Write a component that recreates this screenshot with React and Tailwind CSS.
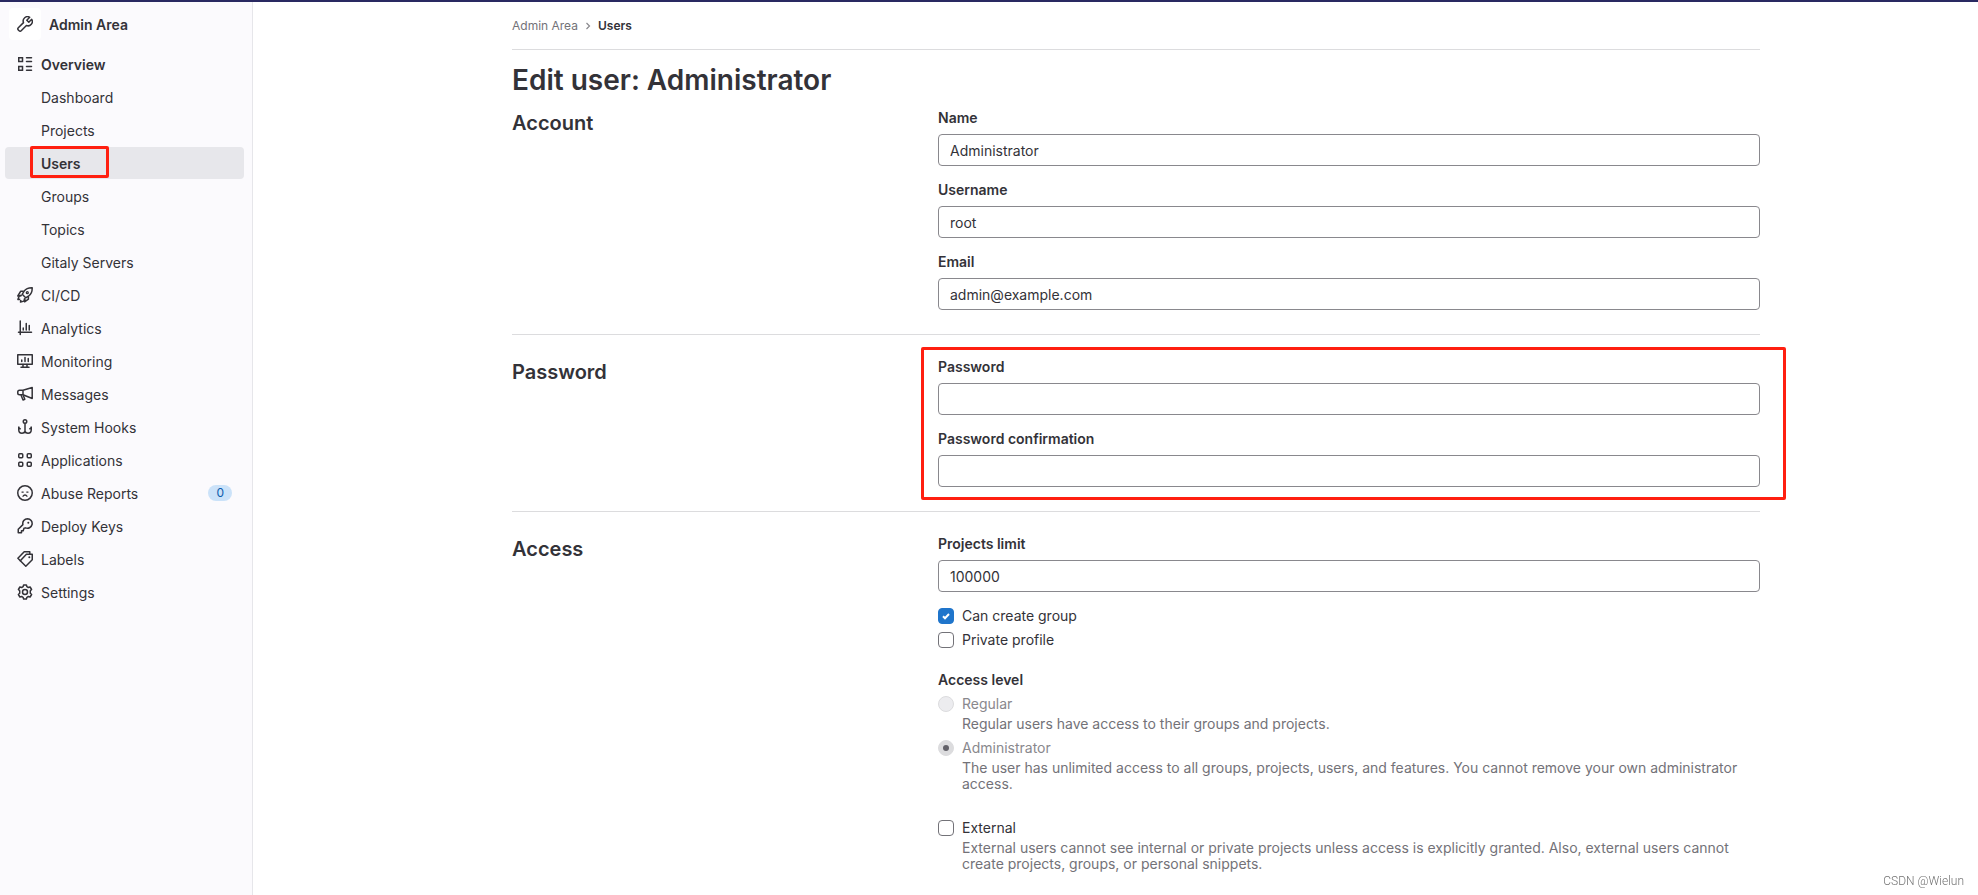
import { useState } from 'react'

const OVERVIEW_ITEMS = ['Dashboard', 'Projects', 'Users', 'Groups', 'Topics', 'Gitaly Servers']

const NAV_ITEMS = [
  { label: 'CI/CD', Icon: RocketIcon },
  { label: 'Analytics', Icon: ChartIcon },
  { label: 'Monitoring', Icon: MonitorIcon },
  { label: 'Messages', Icon: BullhornIcon },
  { label: 'System Hooks', Icon: AnchorIcon },
  { label: 'Applications', Icon: ApplicationsIcon },
  { label: 'Abuse Reports', Icon: SadFaceIcon, count: 0 },
  { label: 'Deploy Keys', Icon: KeyIcon },
  { label: 'Labels', Icon: LabelsIcon },
  { label: 'Settings', Icon: SettingsIcon },
]

export default function App() {
  return (
    <div className="flex min-h-screen flex-col bg-white font-[Inter,sans-serif] text-sm text-[#333238]">
      <div className="h-0.5 bg-[#292961]" />
      <div className="flex flex-1">
        <Sidebar />
        <main className="min-w-0 flex-1 pr-[15px] pl-14">
          <div className="mx-auto max-w-[1248px]">
            <Breadcrumbs />
            <h1 className="mt-3 mb-3 text-[28px] leading-9 font-semibold">Edit user: Administrator</h1>
            <UserForm />
          </div>
        </main>
      </div>
      <div className="fixed right-[14px] bottom-2 font-[Roboto,sans-serif] text-xs leading-3 font-light text-[#737373]">CSDN @Wielun</div>
    </div>
  )
}

function Sidebar() {
  return (
    <aside className="w-[253px] shrink-0 border-r border-[#e6e6ea] bg-[#fbfafd] pr-2 pl-[5px]">
      <a href="#admin" className="mt-1.5 mb-2 ml-1 flex items-center gap-2 font-semibold">
        <span className="flex size-8 items-center justify-center rounded bg-white">
          <WrenchIcon />
        </span>
        <span className="pt-0.5">Admin Area</span>
      </a>
      <nav>
        <ul className="flex flex-col gap-px">
          <NavRow label="Overview" Icon={OverviewIcon} bold />
          {OVERVIEW_ITEMS.map((label) => (
            <NavRow key={label} label={label} active={label === 'Users'} />
          ))}
          {NAV_ITEMS.map((item) => (
            <NavRow key={item.label} {...item} />
          ))}
        </ul>
      </nav>
    </aside>
  )
}

function NavRow({ label, Icon, bold, active, count }) {
  return (
    <li className="relative">
      <a
        href="#admin"
        className={`flex h-8 items-center gap-2 rounded px-3 ${bold || active ? 'font-semibold' : ''} ${active ? 'bg-[#e7e7eb]' : ''}`}
      >
        <span className="size-4 shrink-0">{Icon && <Icon />}</span>
        <span className="flex-1 pt-0.5">{label}</span>
        {count !== undefined && (
          <span className="rounded-full bg-[#cbe2f9] px-2 text-xs leading-4 text-[#0b5cad]">{count}</span>
        )}
      </a>
      {active && (
        <span className="pointer-events-none absolute -top-px left-[25px] h-8 w-[79px] rounded-xs border-3 border-[#ff1f10]" />
      )}
    </li>
  )
}

function Breadcrumbs() {
  return (
    <nav className="flex h-12 items-center border-b border-[#dcdcde] text-xs" aria-label="Breadcrumbs">
      <a href="#admin" className="text-[#737278]">Admin Area</a>
      <svg className="mx-1.5 size-2" viewBox="0 0 8 8" fill="none" stroke="#89888d" strokeWidth="1.2">
        <path d="M2.5 1 5.5 4l-3 3" />
      </svg>
      <a href="#users" className="font-semibold">Users</a>
    </nav>
  )
}

function UserForm() {
  const [createGroup, setCreateGroup] = useState(true)
  const [privateProfile, setPrivateProfile] = useState(false)
  const [external, setExternal] = useState(false)

  return (
    <form onSubmit={(e) => e.preventDefault()}>
      <Section title="Account">
        <Field id="name" label="Name" defaultValue="Administrator" />
        <Field id="username" label="Username" defaultValue="root" />
        <Field id="email" label="Email" type="email" defaultValue="admin@example.com" />
      </Section>

      <hr className="mt-6 mb-6 border-[#dcdcde]" />

      <Section title="Password">
        <Field id="password" label="Password" type="password" />
        <Field id="password_confirmation" label="Password confirmation" type="password" />
        <span className="pointer-events-none absolute -top-3 -right-[26px] -bottom-[13px] -left-[17px] rounded-xs border-3 border-[#ff1f10]" />
      </Section>

      <hr className="mt-6 mb-6 border-[#dcdcde]" />

      <Section title="Access">
        <Field id="projects_limit" label="Projects limit" defaultValue="100000" />
        <div className="flex flex-col gap-2">
          <Checkbox id="can_create_group" label="Can create group" checked={createGroup} onChange={setCreateGroup} />
          <Checkbox id="private_profile" label="Private profile" checked={privateProfile} onChange={setPrivateProfile} />
        </div>
        <fieldset className="mt-2">
          <legend className="mb-2 leading-4 font-semibold">Access level</legend>
          <div className="flex flex-col gap-2">
            <Radio id="regular" label="Regular" help="Regular users have access to their groups and projects." />
            <Radio
              id="admin"
              label="Administrator"
              checked
              help="The user has unlimited access to all groups, projects, users, and features. You cannot remove your own administrator access."
            />
          </div>
        </fieldset>
        <div className="mt-3">
          <Checkbox
            id="external"
            label="External"
            checked={external}
            onChange={setExternal}
            help="External users cannot see internal or private projects unless access is explicitly granted. Also, external users cannot create projects, groups, or personal snippets."
          />
        </div>
      </Section>
    </form>
  )
}

function Section({ title, children }) {
  return (
    <section className="grid grid-cols-3 gap-[30px]">
      <h2 className="text-xl leading-[26px] font-semibold">{title}</h2>
      <div className="relative col-span-2 flex flex-col gap-4">{children}</div>
    </section>
  )
}

function Field({ id, label, type = 'text', defaultValue }) {
  return (
    <div className="flex flex-col gap-2">
      <label htmlFor={id} className="leading-4 font-semibold">{label}</label>
      <input
        id={id}
        type={type}
        defaultValue={defaultValue}
        className="h-8 w-full rounded border border-[#89888d] bg-white px-[11px] text-sm leading-4"
      />
    </div>
  )
}

function Checkbox({ id, label, checked, onChange, help }) {
  return (
    <div className="grid grid-cols-[16px_1fr] gap-x-2 gap-y-1 leading-4">
      <span className="relative size-4">
        <input
          id={id}
          type="checkbox"
          checked={checked}
          onChange={(e) => onChange(e.target.checked)}
          className="block size-4 appearance-none rounded border border-[#737278] bg-white checked:border-[#1f75cb] checked:bg-[#1f75cb]"
        />
        {checked && (
          <svg className="pointer-events-none absolute inset-0 size-4" viewBox="0 0 16 16" fill="none" stroke="#fff" strokeWidth="2">
            <path d="m5 8.2 2 2 4-4.2" />
          </svg>
        )}
      </span>
      <label htmlFor={id}>{label}</label>
      {help && <p className="col-start-2 text-[#737278]">{help}</p>}
    </div>
  )
}

function Radio({ id, label, checked = false, help }) {
  return (
    <div className="grid grid-cols-[16px_1fr] gap-x-2 gap-y-1 leading-4">
      <span className="relative size-4">
        <input
          id={id}
          type="radio"
          name="access_level"
          defaultChecked={checked}
          disabled
          className="block size-4 appearance-none rounded-full border border-[#dcdcde] bg-[#ececef] checked:bg-[#dcdcde]"
        />
        {checked && <span className="absolute inset-[5px] rounded-full bg-[#626168]" />}
      </span>
      <label htmlFor={id} className="text-[#89888d]">{label}</label>
      <p className="col-start-2 text-[#737278]">{help}</p>
    </div>
  )
}

/* 16px outline icons */
function Icon({ children }) {
  return (
    <svg className="size-4" viewBox="0 0 16 16" fill="none" stroke="currentColor" strokeWidth="1.5" aria-hidden="true">
      {children}
    </svg>
  )
}

function WrenchIcon() {
  return (
    <Icon>
      <path d="M12.7 1.3A4.3 4.3 0 0 0 6.5 6.6L1.3 11.8a1.5 1.5 0 0 0 0 2.1l.8.8a1.5 1.5 0 0 0 2.1 0l5.2-5.2A4.3 4.3 0 0 0 14.7 3.3L11.8 6.2 9.8 4.2z" strokeLinejoin="round" />
    </Icon>
  )
}

function OverviewIcon() {
  return (
    <Icon>
      <path d="M1.75 1.75h3.75v3.75H1.75zM1.75 10.5h3.75v3.75H1.75z" />
      <path d="M9.5 1.75h5M9.5 5.5h5M9.5 10.5h5M9.5 14.25h5" strokeLinecap="round" />
    </Icon>
  )
}

function RocketIcon() {
  return (
    <Icon>
      <path d="M15.2.8c-3.7-.1-6.4 1-8.2 3.5L5.2 7.3l3.5 3.5 3-1.8c2.5-1.8 3.6-4.5 3.5-8.2z" strokeLinejoin="round" />
      <path d="M6.6 4.3H3.6L.8 9l3.6-.6M11.4 9.4v2.8l-3.8 2.6.4-3.4" strokeLinejoin="round" />
      <path d="M4.8 8.3 2.2 8.9.9 12.5l2.4-.3M7.7 11.2l-.8 2.9-3.4 1 .4-2.3" strokeLinejoin="round" />
      <circle cx="10.3" cy="5.7" r="1" strokeWidth="1.3" />
    </Icon>
  )
}

function ChartIcon() {
  return (
    <Icon>
      <path d="M3.25 1v13.5M1.5 12.25h13M6.25 8v2M9.25 3.5V10M12.25 5.5V10" strokeLinecap="round" />
    </Icon>
  )
}

function MonitorIcon() {
  return (
    <Icon>
      <path d="M.75 1.75h14.5v9.5H.75z" strokeLinejoin="round" />
      <path d="M4.75 7v1.5M8 4.5v4M11.25 5.5v3M6 11.5v2.5M10 11.5v2.5M4 14.25h8" strokeLinecap="round" />
    </Icon>
  )
}

function BullhornIcon() {
  return (
    <Icon>
      <path d="M2.5 4.25H6l9.2-2.7v11L6 8.75H2.5A1.75 1.75 0 0 1 .75 7v-1A1.75 1.75 0 0 1 2.5 4.25zM6 4.25v4.5" strokeLinejoin="round" />
      <path d="m4 9 2 5 1.8-.8-1.600-4" strokeLinejoin="round" />
    </Icon>
  )
}

function AnchorIcon() {
  return (
    <Icon>
      <circle cx="8" cy="2.5" r="1.75" />
      <path d="M8 4.25v10M1.75 7.5v3.25c0 2 1.4 3.5 3.25 3.5 1.6 0 2.6-.8 3-2 .4 1.2 1.4 2 3 2 1.85 0 3.25-1.5 3.25-3.5V7.5M1.75 8.6l1.9 1.6M14.25 8.600l-1.9 1.6" strokeLinejoin="round" />
    </Icon>
  )
}

function ApplicationsIcon() {
  return (
    <Icon>
      <rect x="1.75" y="1.75" width="4" height="4" rx=".9" />
      <rect x="10.25" y="1.75" width="4" height="4" rx=".9" />
      <rect x="1.75" y="10.25" width="4" height="4" rx=".9" />
      <rect x="10.25" y="10.25" width="4" height="4" rx=".9" />
    </Icon>
  )
}

function SadFaceIcon() {
  return (
    <Icon>
      <circle cx="8" cy="8" r="7.25" />
      <path d="M6 11.2c.5-.9 1.200-1.200 2-1.200s1.500.3 2 1.200" strokeLinecap="round" strokeWidth="1.3" />
      <path d="M5 7.100h1.200M9.800 7.100H11" strokeLinecap="round" strokeWidth="1.3" />
    </Icon>
  )
}

function KeyIcon() {
  return (
    <Icon>
      <path d="M10.5.75a4.75 4.75 0 0 0-4.600 5.9L1.25 11.3v3.450H4.500v-2h1.700l.8-2.500 1.500-.4A4.750 4.750 0 1 0 10.500.750z" strokeLinejoin="round" />
      <circle cx="11.3" cy="4.7" r="1" fill="currentColor" stroke="none" />
    </Icon>
  )
}

function LabelsIcon() {
  return (
    <Icon>
      <path d="M9.4 3.25h5.85v5.5L8.8 15.2 3.3 9.7z" strokeLinejoin="round" />
      <path d="M3.8 10.2.9 7.3l6.3-6.5h5.6v2.2" strokeLinejoin="round" />
      <circle cx="12.3" cy="6.2" r="1" fill="currentColor" stroke="none" />
    </Icon>
  )
}

function SettingsIcon() {
  return (
    <Icon>
      <path d="M6.6.9h2.8l.5 1.8 1.4.8 1.8-.5 1.5 2.5-1.300 1.300v2.400l1.300 1.300-1.500 2.500-1.800-.5-1.400.8-.5 1.800H6.600l-.5-1.800-1.400-.8-1.800.5-1.500-2.500 1.300-1.300V6.800L1.400 5.500 2.900 3l1.800.5 1.400-.8z" strokeLinejoin="round" />
      <circle cx="8" cy="8" r="2.5" />
    </Icon>
  )
}
